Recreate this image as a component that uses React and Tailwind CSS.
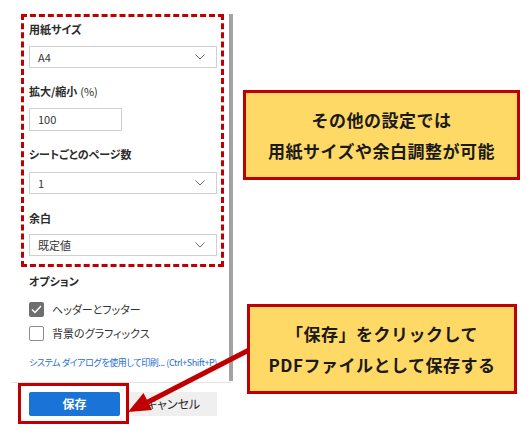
import React from 'react';

const ui = "[font-family:'Noto_Sans_CJK_JP','Noto_Sans',sans-serif] [font-feature-settings:'palt']";
const jp = "[font-family:'Noto_Sans_CJK_JP','Noto_Sans',sans-serif] [font-feature-settings:normal]";

function Chevron() {
    return (
        <svg width="10" height="6" viewBox="0 0 10 6" className="shrink-0">
            <path d="M0.5 0.5 L5 5 L9.5 0.5" fill="none" stroke="#6b6b6b" strokeWidth="1" />
        </svg>
    );
}

function Select({ value }) {
    return (
        <div className="w-[188px] h-[22px] border border-[#d0d0d0] bg-white flex items-center justify-between pl-[8px] pr-[11px]">
            <span className="text-[11px] text-[#333] leading-none">{value}</span>
            <Chevron />
        </div>
    );
}

function Label({ children, className = '' }) {
    return (
        <div className={`h-[16px] flex items-center text-[11px] font-semibold text-[#2b2b2b] ${className}`}>
            {children}
        </div>
    );
}

function Checkbox({ checked, label, className = '' }) {
    return (
        <div className={`flex items-center h-[15px] ${className}`}>
            {checked ? (
                <div className="w-[15px] h-[15px] rounded-[2px] bg-[#6e6e6e] flex items-center justify-center">
                    <svg width="11" height="9" viewBox="0 0 11 9">
                        <path d="M1 4.5 L4 7.5 L10 1" fill="none" stroke="#fff" strokeWidth="1.4" />
                    </svg>
                </div>
            ) : (
                <div className="w-[15px] h-[15px] rounded-[2px] border border-[#8c8c8c] bg-white" />
            )}
            <span className="ml-[8px] text-[11px] text-[#333]">{label}</span>
        </div>
    );
}

function Callout({ lines, className = '' }) {
    return (
        <div className={`border-[3px] border-[#c00000] bg-[#ffd966] flex flex-col items-center justify-center ${jp} ${className}`}>
            {lines.map((l) => (
                <div key={l} className="text-[17px] font-bold leading-[31px] tracking-[0.5px] text-[#1a1a1a]">
                    {l}
                </div>
            ))}
        </div>
    );
}

export default function App() {
    return (
        <div className={`relative w-[530px] h-[442px] bg-white flex overflow-hidden ${ui}`}>
            {/* Print settings panel */}
            <div className="w-[240px] shrink-0 flex flex-col">
                <div className="h-[382px] flex">
                    <div className="w-[229px] pl-[21px] pt-[14px]">
                        <div className="w-[203px] h-[253px] border-[3px] border-dashed border-[#c00000] pl-[5px] pt-[4px]">
                            <Label>用紙サイズ</Label>
                            <div className="mt-[9px]">
                                <Select value="A4" />
                            </div>
                            <Label className="mt-[15px]">
                                拡大/縮小 <span className="ml-[3px] font-normal">(%)</span>
                            </Label>
                            <div className="mt-[9px] w-[93px] h-[23px] border border-[#d0d0d0] flex items-center pl-[8px] text-[11px] text-[#333]">
                                100
                            </div>
                            <Label className="mt-[15px]">シートごとのページ数</Label>
                            <div className="mt-[10px]">
                                <Select value="1" />
                            </div>
                            <Label className="mt-[16px]">余白</Label>
                            <div className="mt-[8px]">
                                <Select value="既定値" />
                            </div>
                        </div>
                        <div className="pl-[8px]">
                            <Label className="mt-[6px]">オプション</Label>
                            <Checkbox checked label="ヘッダーとフッター" className="mt-[13px]" />
                            <Checkbox label="背景のグラフィックス" className="mt-[9px]" />
                            <div className="mt-[15px] h-[14px] flex items-center text-[9px] tracking-[-0.4px] text-[#1d6fcf] whitespace-nowrap">
                                システム ダイアログを使用して印刷... (Ctrl+Shift+P)
                            </div>
                        </div>
                    </div>
                    <div className="mt-[14px] w-[4px] h-[367px] bg-[#a3a3a3]" />
                </div>
                <div className="ml-[11px] w-[220px] h-px bg-[#e4e4e4]" />
                <div className="flex items-start ml-[18px]">
                    <div className="border-[3px] border-[#c00000] pl-[8px] pr-[6px] pt-[6px] pb-[5px]">
                        <div className="w-[91px] h-[24px] rounded-[2px] bg-[#1a74d8] flex items-center justify-center text-[12px] font-bold text-white">
                            保存
                        </div>
                    </div>
                    <div className="mt-[9px] w-[88px] h-[24px] bg-[#efefef] flex items-center justify-center text-[12px] text-[#2b2b2b]">
                        キャンセル
                    </div>
                </div>
            </div>

            {/* Annotations */}
            <div className="flex flex-col">
                <Callout
                    className="ml-[3px] mt-[90px] w-[277px] h-[90px]"
                    lines={['その他の設定では', '用紙サイズや余白調整が可能']}
                />
                <Callout
                    className="ml-[7px] mt-[124px] w-[270px] h-[90px]"
                    lines={['「保存」をクリックして', 'PDFファイルとして保存する']}
                />
            </div>

            <svg className="absolute inset-0 pointer-events-none" width="530" height="442" viewBox="0 0 530 442">
                <line x1="249" y1="350" x2="146" y2="403" stroke="#c00000" strokeWidth="5" />
                <polygon points="128,412 152,410 143.5,393" fill="#c00000" />
            </svg>
        </div>
    );
}
